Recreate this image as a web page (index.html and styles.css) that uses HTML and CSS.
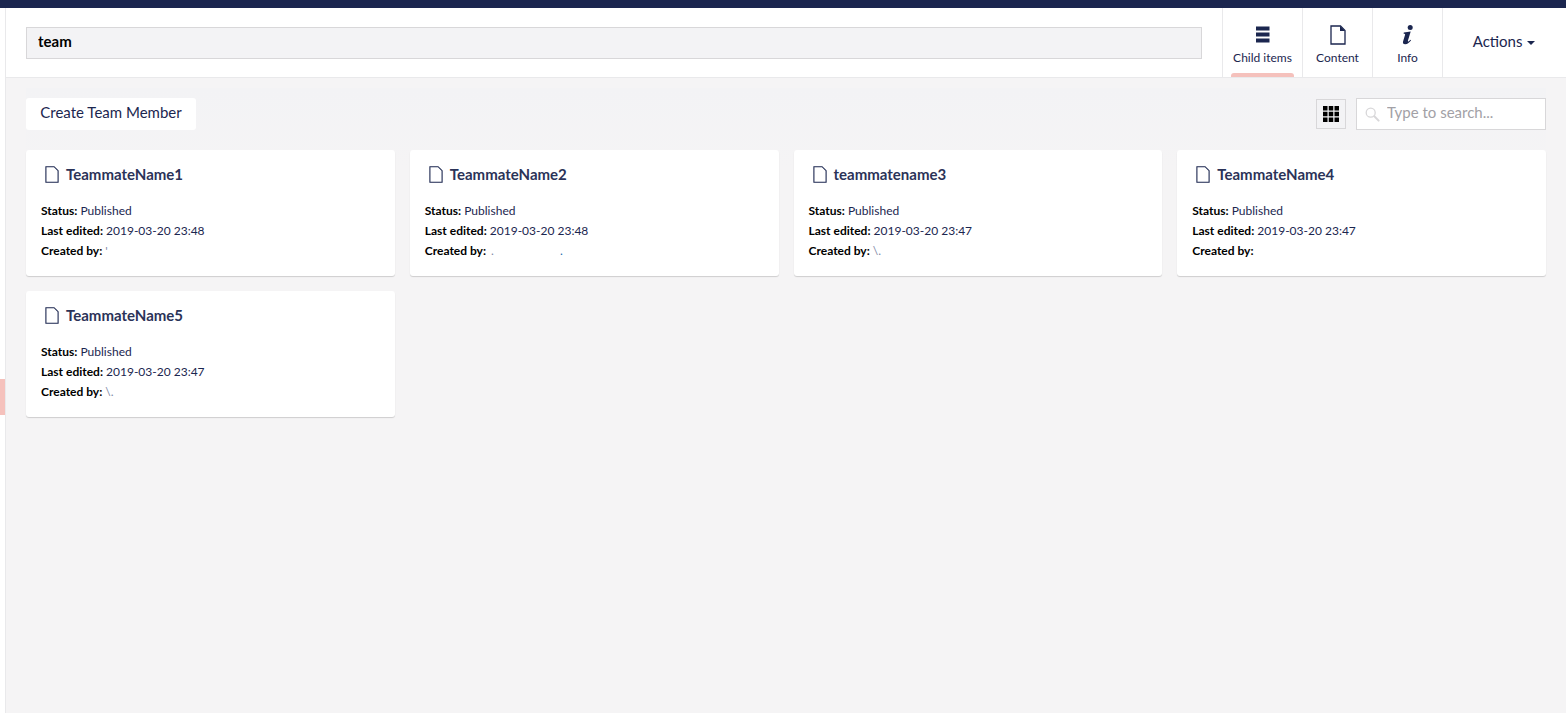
FILE: index.html
```html
<!DOCTYPE html>
<html lang="en">
<head>
<meta charset="utf-8">
<title>team</title>
<link rel="stylesheet" href="styles.css">
</head>
<body>
<div class="topbar"></div>
<div class="shell">
  <aside class="rail"><span class="rail-handle"></span></aside>
  <main class="editor">
    <header class="head">
      <div class="name-wrap"><input class="name" type="text" value="team" aria-label="Name"></div>
      <nav class="apps">
        <a class="app active">
          <svg class="app-icon" width="14" height="17" viewBox="0 0 14 17"><path fill="#1b264f" d="M0 .5h13.500v4H0zM0 6.500h13.500v4H0zM0 12.500h13.500v4H0z"/></svg>
          <span>Child items</span>
        </a>
        <a class="app">
          <svg class="app-icon" width="16" height="20" viewBox="0 0 16 20"><path fill="none" stroke="#1b264f" stroke-width="1.300" d="M1 1h9.500L15 5.500V19H1z"/><path fill="#1b264f" d="M10 1l5 5h-5z"/></svg>
          <span>Content</span>
        </a>
        <a class="app">
          <svg class="app-icon" width="12" height="20" viewBox="0 0 12 20"><circle cx="8.200" cy="2.500" r="2.500" fill="#1b264f"/><path fill="#1b264f" d="M1.800 7.500 8.700 6.600 5.900 15.800c-.2.800.4.900 1 .4l1.500-1.500.7.600C7.500 17.600 5.600 19.300 3.200 19.300 1.200 19.300.6 18.200 1.100 16.300L3.100 9.800c.1-.6-.3-.9-1.500-1z"/></svg>
          <span>Info</span>
        </a>
      </nav>
      <button class="actions" type="button">Actions <span class="caret"></span></button>
    </header>
    <section class="body">
      <div class="body-inner">
        <div class="toolbar">
          <button class="create" type="button">Create Team Member</button>
          <div class="tools">
            <button class="layout" type="button" aria-label="Grid layout">
              <svg width="16" height="16" viewBox="0 0 16 16"><path fill="#000" d="M0 0h4.500v4.500H0zM5.750 0h4.500v4.500h-4.500zM11.500 0H16v4.500h-4.500zM0 5.750h4.500v4.500H0zM5.750 5.750h4.500v4.500h-4.500zM11.500 5.750H16v4.500h-4.500zM0 11.500h4.500V16H0zM5.750 11.500h4.500V16h-4.500zM11.500 11.500H16V16h-4.500z"/></svg>
            </button>
            <label class="search">
              <svg width="15" height="15" viewBox="0 0 15 15"><circle cx="5.700" cy="5.700" r="4.500" fill="none" stroke="#d8d7d9" stroke-width="1.300"/><path stroke="#d8d7d9" stroke-width="2" stroke-linecap="round" d="m9.300 9.300 4.300 4.300"/></svg>
              <input type="text" placeholder="Type to search...">
            </label>
          </div>
        </div>
        <div class="cards">
          <article class="card">
            <h3 class="card-title"><svg class="doc" width="14" height="17" viewBox="0 0 14 17"><path d="M.9.7h8.200l4 4v11.600H.9z"/></svg>TeammateName1</h3>
            <p><b>Status:</b> Published</p>
            <p><b>Last edited:</b> 2019-03-20 23:48</p>
            <p><b>Created by:</b> <span class="redact">'</span></p>
          </article>
          <article class="card">
            <h3 class="card-title"><svg class="doc" width="14" height="17" viewBox="0 0 14 17"><path d="M.9.7h8.200l4 4v11.600H.9z"/></svg>TeammateName2</h3>
            <p><b>Status:</b> Published</p>
            <p><b>Last edited:</b> 2019-03-20 23:48</p>
            <p><b>Created by:</b> <span class="redact wide">.</span><span class="dot">.</span></p>
          </article>
          <article class="card">
            <h3 class="card-title"><svg class="doc" width="14" height="17" viewBox="0 0 14 17"><path d="M.9.7h8.200l4 4v11.600H.9z"/></svg>teammatename3</h3>
            <p><b>Status:</b> Published</p>
            <p><b>Last edited:</b> 2019-03-20 23:47</p>
            <p><b>Created by:</b> <span class="redact">\.</span></p>
          </article>
          <article class="card">
            <h3 class="card-title"><svg class="doc" width="14" height="17" viewBox="0 0 14 17"><path d="M.9.7h8.200l4 4v11.600H.9z"/></svg>TeammateName4</h3>
            <p><b>Status:</b> Published</p>
            <p><b>Last edited:</b> 2019-03-20 23:47</p>
            <p><b>Created by:</b></p>
          </article>
          <article class="card">
            <h3 class="card-title"><svg class="doc" width="14" height="17" viewBox="0 0 14 17"><path d="M.9.7h8.200l4 4v11.600H.9z"/></svg>TeammateName5</h3>
            <p><b>Status:</b> Published</p>
            <p><b>Last edited:</b> 2019-03-20 23:47</p>
            <p><b>Created by:</b> <span class="redact">\.</span></p>
          </article>
        </div>
      </div>
    </section>
  </main>
</div>
</body>
</html>
```
FILE: styles.css
```css
* { box-sizing: border-box; }
html, body { height: 100%; }
body {
  margin: 0;
  overflow: hidden;
  font-family: Lato, "Open Sans", sans-serif;
  color: #1b264f;
  background: #f5f4f5;
  display: flex;
  flex-direction: column;
}
.topbar { height: 8px; flex: none; background: #1b264f; }
.shell { flex: 1; display: flex; min-height: 0; position: relative; }
.rail { width: 6px; flex: none; background: #fff; border-right: 1px solid #e9e9eb; }
.rail-handle {
  position: absolute;
  left: 0;
  top: 371px;
  width: 5px;
  height: 36px;
  background: #f5c1bc;
}
.editor { flex: 1; min-width: 0; display: flex; flex-direction: column; }
.head {
  height: 70px;
  flex: none;
  display: flex;
  background: #fff;
  border-bottom: 1px solid #e9e9eb;
}
.name-wrap { flex: 1; padding: 19px 20px 0; }
.name {
  display: block;
  width: 100%;
  height: 32px;
  padding: 0 11px 5px;
  border: 1px solid #d8d7d9;
  background: #f3f3f5;
  font: 700 15px Lato, sans-serif;
  color: #000;
  outline: none;
}
.apps { display: flex; flex: none; }
.app {
  position: relative;
  height: 69px;
  border-left: 1px solid #e9e9eb;
  display: flex;
  flex-direction: column;
  align-items: center;
  font-size: 12px;
  line-height: 15px;
  color: #1b264f;
  width: 70px;
  padding-top: 18px;
}
.app:first-child { width: 80px; }
.app span { position: absolute; top: 42px; white-space: nowrap; }
.app.active::after {
  content: "";
  position: absolute;
  left: 8px;
  right: 8px;
  bottom: 0;
  height: 4px;
  background: #f5c1bc;
  border-radius: 3px 3px 0 0;
}
.app-icon { display: block; }
.app:nth-child(2) .app-icon, .app:nth-child(3) .app-icon { margin-top: -1px; }
.actions {
  width: 124px;
  flex: none;
  border: 0;
  border-left: 1px solid #e9e9eb;
  background: #fff;
  color: #1b264f;
  font: 15px Lato, sans-serif;
  padding: 0 1px 4px 0;
}
.caret {
  display: inline-block;
  vertical-align: middle;
  margin-left: 1px;
  border-top: 4px solid #1b264f;
  border-left: 4px solid transparent;
  border-right: 4px solid transparent;
}
.body { flex: 1; min-height: 0; padding: 10px 20px 0; }
.body-inner {
  height: 100%;
  padding-top: 10px;
  background: linear-gradient(#f3f3f5, #f5f4f5 80px);
}
.toolbar {
  display: flex;
  justify-content: space-between;
  align-items: center;
  height: 32px;
  margin-bottom: 20px;
}
.create {
  height: 32px;
  width: 170px;
  padding: 0 0 5px;
  border: 0;
  border-radius: 3px;
  background: #fff;
  color: #1b264f;
  font: 15px Lato, sans-serif;
}
.tools { display: flex; gap: 10px; align-items: center; }
.layout {
  width: 30px;
  height: 30px;
  padding: 0;
  border: 1px solid #d8d7d9;
  background: #f3f3f5;
  display: flex;
  align-items: center;
  justify-content: center;
}
.search {
  width: 190px;
  height: 32px;
  border: 1px solid #d8d7d9;
  background: #fff;
  display: flex;
  align-items: center;
  gap: 7px;
  padding-left: 8px;
}
.search input {
  flex: 1;
  min-width: 0;
  border: 0;
  outline: 0;
  padding: 0 0 5px;
  font: 15px Lato, sans-serif;
  background: none;
}
.search input::placeholder { color: #a2a1a6; opacity: 1; }
.cards {
  display: grid;
  grid-template-columns: repeat(4, 1fr);
  gap: 15px;
}
.card {
  height: 126px;
  background: #fff;
  border-radius: 3px;
  box-shadow: 0 1px 1px rgba(0, 0, 0, .16);
  padding: 15px;
  font-size: 12px;
  line-height: 20px;
  color: #1b264f;
}
.card-title {
  display: flex;
  align-items: center;
  height: 18px;
  margin: 0 0 18px;
  padding-left: 4px;
  font-size: 15px;
  font-weight: 700;
  color: #2b3358;
}
.doc { flex: none; margin-right: 7px; fill: none; stroke: #1b264f; stroke-width: 1.100; }
.card p { margin: 0; height: 20px; white-space: nowrap; }
.card b { color: #000; font-weight: 700; }
.redact { color: #7f89a6; }
.redact.wide { display: inline-block; width: 69px; margin-left: 2px; }
.dot { color: #1b6fb0; }
```
